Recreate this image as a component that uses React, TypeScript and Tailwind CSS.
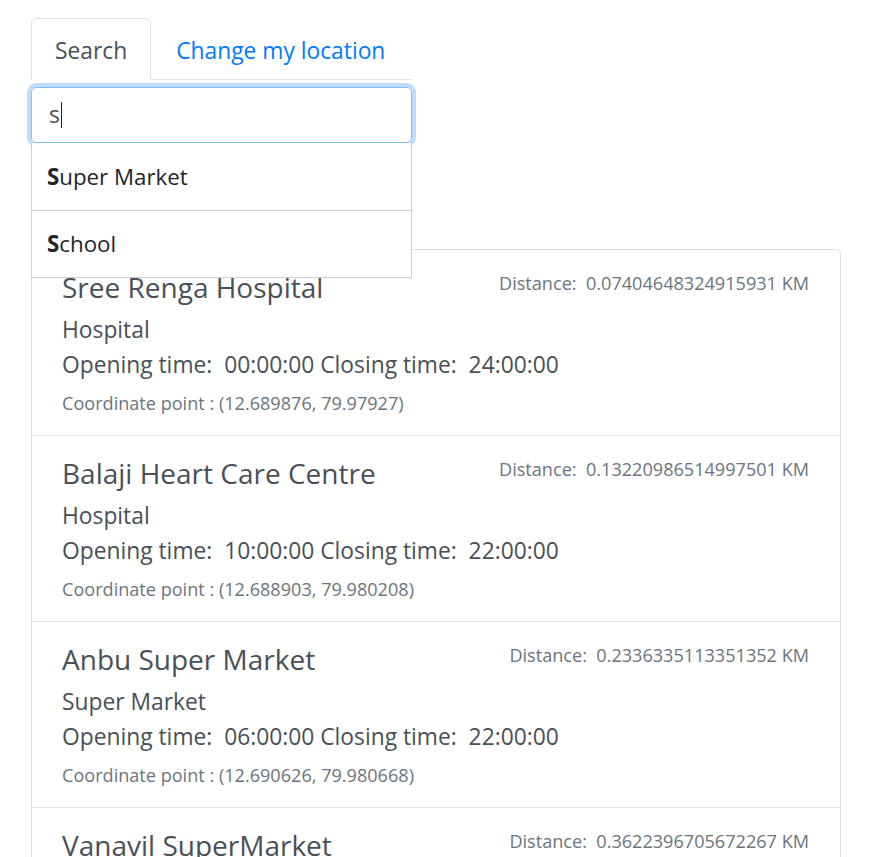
const PLACES = [
  {
    name: "Sree Renga Hospital",
    type: "Hospital",
    open: "00:00:00",
    close: "24:00:00",
    point: "(12.689876, 79.97927)",
    distance: "0.07404648324915931",
  },
  {
    name: "Balaji Heart Care Centre",
    type: "Hospital",
    open: "10:00:00",
    close: "22:00:00",
    point: "(12.688903, 79.980208)",
    distance: "0.13220986514997501",
  },
  {
    name: "Anbu Super Market",
    type: "Super Market",
    open: "06:00:00",
    close: "22:00:00",
    point: "(12.690626, 79.980668)",
    distance: "0.2336335113351352",
  },
  {
    name: "Vanavil SuperMarket",
    type: "Super Market",
    open: "07:00:00",
    close: "23:00:00",
    point: "(12.691544, 79.981932)",
    distance: "0.3622396705672267",
  },
];

const SUGGESTIONS = ["Super Market", "School"];

export default function App() {
  return (
    <div
      className="h-screen overflow-hidden bg-white pl-[31px] pt-[18px] text-[22.8px] text-[#495057]"
      style={{ fontFamily: '"Open Sans", "Noto Sans", sans-serif' }}
    >
      <div className="relative w-[381px]">
        <nav className="flex border-b border-[#dee2e6]">
          <div className="-mb-px rounded-t-[5px] border border-[#dee2e6] border-b-white bg-white px-[23px] pb-[11px] pt-[15px] leading-[34px]">
            Search
          </div>
          <a className="px-[25px] pb-[11px] pt-[16px] leading-[34px] text-[#007bff]">Change my location</a>
        </nav>

        <div className="mt-[7px] flex h-[56px] items-center rounded-[5px] border border-[#80bdff] px-[17px] shadow-[0_0_0_4px_rgba(0,123,255,0.25)]">
          <span>s</span>
          <span className="ml-px h-[26px] w-px bg-[#212529]" />
        </div>

        <ul className="absolute left-0 right-0 top-full z-10 border-x border-b border-[#cfcfcf] bg-white text-[22.3px] text-[#212529]">
          {SUGGESTIONS.map((s, i) => (
            <li
              key={s}
              className={`flex h-[67px] items-center px-[15px] ${i > 0 ? "border-t border-[#cfcfcf]" : ""}`}
            >
              <strong className="font-bold">{s[0]}</strong>
              {s.slice(1)}
            </li>
          ))}
        </ul>
      </div>

      <div className="mt-[106px] w-[810px] rounded-t-[5px] border-x border-t border-[#e0e0e0]">
        {PLACES.map((p, i) => (
          <div
            key={p.name}
            className={`pb-[19px] pl-[30px] pr-[31px] pt-[20px] ${i > 0 ? "border-t border-[#e0e0e0]" : ""}`}
          >
            <div className="flex items-start justify-between">
              <h5 className="text-[28px] leading-[34px]">{p.name}</h5>
              <small className="text-[18.1px] leading-[26px] text-[#6c757d]">
                Distance:&nbsp; {p.distance} KM
              </small>
            </div>
            <p className="mt-[9px] leading-[34px]">{p.type}</p>
            <p className="mt-px leading-[34px]">
              Opening time:&nbsp; {p.open} Closing time:&nbsp; {p.close}
            </p>
            <small className="mt-[8px] block text-[18.1px] leading-[26px] text-[#6c757d]">
              Coordinate point : {p.point}
            </small>
          </div>
        ))}
      </div>
    </div>
  );
}
